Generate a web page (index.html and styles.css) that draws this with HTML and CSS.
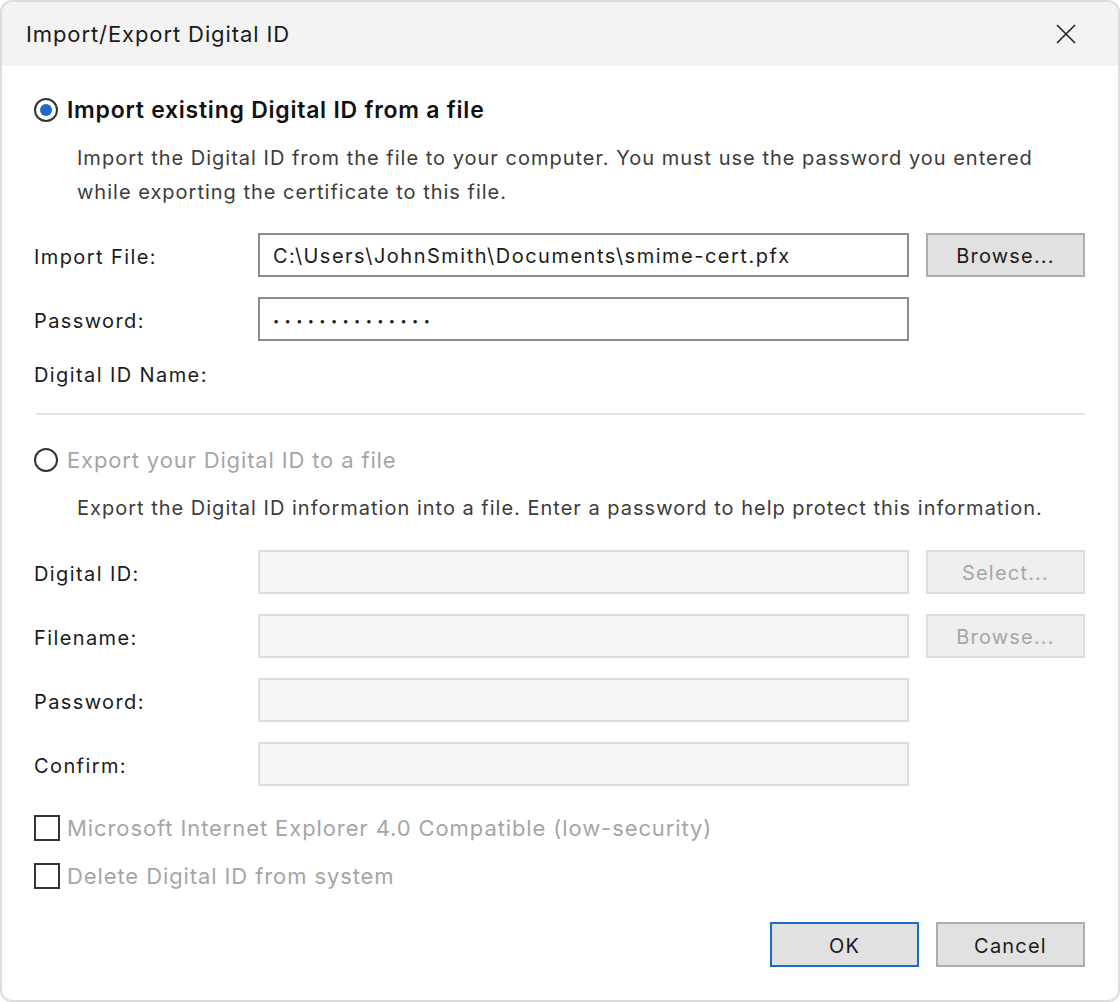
FILE: index.html
```html
<!DOCTYPE html>
<html lang="en">

<head>
    <meta charset="UTF-8">
    <meta name="viewport" content="width=device-width, initial-scale=1.0">
    <title>Import/Export Digital ID</title>
    <link rel="stylesheet" href="styles.css">
</head>

<body>
    <div class="dialog">
        <div class="titlebar">
            <span class="title">Import/Export Digital ID</span>
            <span class="close">
                <svg width="20" height="20" viewBox="0 0 20 20">
                    <path d="M1 1 L19 19 M19 1 L1 19" stroke="#222" stroke-width="1.6" fill="none" />
                </svg>
            </span>
        </div>

        <div class="content">
            <div class="option">
                <span class="radio checked"></span>
                <span class="option-text strong">Import existing Digital ID from a file</span>
            </div>
            <p class="desc">Import the Digital ID from the file to your computer. You must use the password you entered
                while exporting the certificate to this file.</p>

            <div class="row first">
                <span class="label">Import File:</span>
                <div class="field">C:\Users\JohnSmith\Documents\smime-cert.pfx</div>
                <div class="btn">Browse...</div>
            </div>
            <div class="row">
                <span class="label">Password:</span>
                <div class="field"><span class="dots">••••••••••••••</span></div>
            </div>
            <div class="label name">Digital ID Name:</div>

            <div class="sep"></div>

            <div class="option off">
                <span class="radio"></span>
                <span class="option-text">Export your Digital ID to a file</span>
            </div>
            <p class="desc">Export the Digital ID information into a file. Enter a password to help protect this information.</p>

            <div class="row first">
                <span class="label">Digital ID:</span>
                <div class="field disabled"></div>
                <div class="btn disabled">Select...</div>
            </div>
            <div class="row">
                <span class="label">Filename:</span>
                <div class="field disabled"></div>
                <div class="btn disabled">Browse...</div>
            </div>
            <div class="row">
                <span class="label">Password:</span>
                <div class="field disabled"></div>
            </div>
            <div class="row">
                <span class="label">Confirm:</span>
                <div class="field disabled"></div>
            </div>

            <div class="check first">
                <span class="box"></span>
                <span>Microsoft Internet Explorer 4.0 Compatible (low-security)</span>
            </div>
            <div class="check">
                <span class="box"></span>
                <span>Delete Digital ID from system</span>
            </div>

            <div class="actions">
                <div class="btn default">OK</div>
                <div class="btn">Cancel</div>
            </div>
        </div>
    </div>
</body>

</html>
```

FILE: styles.css
```css
html,
body {
    margin: 0;
    background: #fff;
}

body {
    font-family: Inter, "Noto Sans", sans-serif;
    color: #1b1b1b;
}

.dialog {
    width: 1120px;
    height: 1002px;
    box-sizing: border-box;
    border: 2px solid #dcdcdc;
    border-radius: 12px;
    overflow: hidden;
    background: #fff;
}

.titlebar {
    height: 64px;
    background: #f3f3f3;
    display: flex;
    align-items: center;
    justify-content: space-between;
    padding: 0 42px 0 24px;
}

.title {
    font-size: 22px;
    letter-spacing: 0.9px;
    color: #1b1b1b;
}

.close {
    display: flex;
}

.content {
    padding: 27px 33px 0 32px;
}

.option {
    display: flex;
    align-items: center;
    gap: 9px;
    height: 34px;
}

.option-text {
    font-size: 22px;
    letter-spacing: 0.85px;
}

.strong {
    font-size: 23px;
    font-weight: 600;
    letter-spacing: 0.75px;
    color: #111;
}

.option.off .option-text {
    color: #a6a6a6;
}

.radio {
    width: 20px;
    height: 20px;
    border: 2px solid #333;
    border-radius: 50%;
    display: flex;
    align-items: center;
    justify-content: center;
}

.radio.checked::after {
    content: "";
    width: 12px;
    height: 12px;
    border-radius: 50%;
    background: #1a6cc6;
}

.desc {
    margin: 14px 0 0 43px;
    font-size: 20px;
    line-height: 34px;
    letter-spacing: 1px;
    color: #3c3c3c;
}

.row {
    display: grid;
    grid-template-columns: 207px 651px 159px;
    column-gap: 17px;
    align-items: center;
    height: 44px;
    margin-top: 20px;
}

.row.first {
    margin-top: 24px;
}

.off+.desc+.row.first {
    margin-top: 25px;
}

.label {
    font-size: 20px;
    letter-spacing: 1.4px;
    color: #1b1b1b;
}

.row .label {
    padding-top: 3px;
}

.label.name {
    margin-top: 17px;
    line-height: 34px;
}

.field {
    height: 44px;
    box-sizing: border-box;
    border: 2px solid #8c8c8c;
    padding: 0 13px;
    font-size: 20px;
    line-height: 43px;
    letter-spacing: 1.5px;
    color: #1b1b1b;
    white-space: nowrap;
    overflow: hidden;
}

.dots {
    font-size: 11px;
    letter-spacing: 5.4px;
    position: relative;
    top: -2px;
}

.field.disabled {
    background: #f5f5f5;
    border-color: #dedede;
}

.btn {
    height: 44px;
    box-sizing: border-box;
    border: 2px solid #adadad;
    background: #e1e1e1;
    font-size: 20px;
    line-height: 43px;
    letter-spacing: 1.2px;
    text-align: center;
    color: #1b1b1b;
    overflow: hidden;
}

.btn.disabled {
    background: #efefef;
    border-color: #dcdcdc;
    color: #a6a6a6;
}

.btn.default {
    border-color: #1b6ec4;
}

.sep {
    height: 2px;
    background: #e3e3e3;
    margin-top: 21px;
    margin-left: 2px;
}

.option.off {
    margin-top: 28px;
}

.check {
    display: flex;
    align-items: center;
    gap: 7px;
    height: 34px;
    margin-top: 14px;
    font-size: 22px;
    letter-spacing: 0.9px;
    color: #a6a6a6;
}

.check.first {
    margin-top: 25px;
}

.box {
    width: 22px;
    height: 22px;
    border: 2px solid #333;
}

.actions {
    display: flex;
    justify-content: flex-end;
    gap: 17px;
    margin-top: 29px;
}

.actions .btn {
    width: 149px;
    height: 45px;
    line-height: 45px;
}
```
